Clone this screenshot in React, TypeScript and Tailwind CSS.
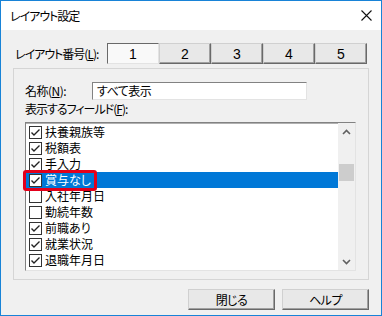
import React from "react";

const jp = "font-['Noto_Sans_CJK_JP',sans-serif] [font-feature-settings:'palt']";

const fields = [
  { label: "扶養親族等", checked: true },
  { label: "税額表", checked: true },
  { label: "手入力", checked: true },
  { label: "賞与なし", checked: true, selected: true },
  { label: "入社年月日", checked: false },
  { label: "勤続年数", checked: false },
  { label: "前職あり", checked: true },
  { label: "就業状況", checked: true },
  { label: "退職年月日", checked: true },
];

function CheckBox({ checked }: { checked: boolean }) {
  return (
    <div className="w-[13px] h-[13px] border border-[#333333] bg-white flex items-center justify-center shrink-0">
      {checked ? (
        <svg width="11" height="11" viewBox="0 0 11 11">
          <polyline points="1.5,5.5 4,8 9.5,2.5" fill="none" stroke="#222" strokeWidth="1.4" />
        </svg>
      ) : null}
    </div>
  );
}

function Chevron({ up }: { up?: boolean }) {
  return (
    <svg width="9" height="6" viewBox="0 0 9 6">
      <polyline
        points={up ? "1,5 4.5,1.5 8,5" : "1,1 4.5,4.5 8,1"}
        fill="none"
        stroke="#606060"
        strokeWidth="1.6"
      />
    </svg>
  );
}

const raised =
  "bg-[#e8e8e8] border border-t-[#d0d0d0] border-l-[#d0d0d0] border-r-[#696969] border-b-[#696969] shadow-[inset_-1px_-1px_0_#a0a0a0]";

export default function App() {
  const [tab, setTab] = React.useState(1);
  return (
    <div className={`w-[382px] h-[316px] overflow-hidden border border-[#1883d7] flex flex-col bg-[#f0f0f0] text-black text-[12px] whitespace-nowrap ${jp}`}>
      {/* title */}
      <div className="h-[29px] bg-white flex items-center justify-between pl-[9px] pr-[9px] shrink-0">
        <span className="leading-[16px] tracking-[-1px]">レイアウト設定</span>
        <svg width="11" height="11" viewBox="0 0 11 11">
          <path d="M0.5 0.5 L10.5 10.5 M10.5 0.5 L0.5 10.5" stroke="#111" strokeWidth="1.1" />
        </svg>
      </div>

      {/* body */}
      <div className="flex-1 flex flex-col">
        <div className="flex items-center pt-[13px] pl-[14px]">
          <span className="w-[92px] shrink-0 leading-[16px] tracking-[-1px]">
            レイアウト番号(<span className="underline">L</span>):
          </span>
          <div className="flex">
            {[1, 2, 3, 4, 5].map((n) =>
              n === tab ? (
                <button
                  key={n}
                  onClick={() => setTab(n)}
                  className="w-[52px] h-[21px] bg-[#f9f9f9] border border-t-[#696969] border-l-[#696969] border-r-[#e3e3e3] border-b-[#e3e3e3] font-['Liberation_Sans',sans-serif] text-[14px] leading-[18px]"
                >
                  {n}
                </button>
              ) : (
                <button
                  key={n}
                  onClick={() => setTab(n)}
                  className={`w-[52px] h-[21px] ${raised} font-['Liberation_Sans',sans-serif] text-[14px] leading-[18px]`}
                >
                  {n}
                </button>
              )
            )}
          </div>
        </div>

        {/* group box */}
        <div className="mt-[4px] ml-[12px] w-[356px] h-[212px] shrink-0 border border-[#d5d5d5] flex flex-col">
          <div className="flex items-center mt-[13px] pl-[11px]">
            <span className="w-[67px] shrink-0 leading-[16px] tracking-[-0.5px]">
              名称(<span className="underline">N</span>):
            </span>
            <div className="w-[215px] h-[18px] bg-white border border-t-[#828282] border-l-[#828282] border-r-[#e3e3e3] border-b-[#e3e3e3] pl-[4px] leading-[16px] tracking-[-0.5px]">
              すべて表示
            </div>
          </div>
          <div className="pl-[11px] mt-[1px] leading-[16px] tracking-[-1px]">
            表示するフィールド(<span className="underline">F</span>):
          </div>

          {/* listbox */}
          <div className="relative mt-[5px] ml-[11px] w-[331px] h-[149px] bg-white border border-t-[#828282] border-l-[#828282] border-r-[#e3e3e3] border-b-[#e3e3e3] shadow-[inset_0_1px_0_#b0b0b0] flex">
            <div className="flex-1 flex flex-col pt-[1px]">
              {fields.map((f) => (
                <div
                  key={f.label}
                  className={`h-[16px] flex items-center pl-[3px] gap-[3px] ${f.selected ? "bg-[#0078d7] text-white" : ""}`}
                >
                  <CheckBox checked={f.checked} />
                  <span className="leading-[16px]">{f.label}</span>
                </div>
              ))}
            </div>
            <div className="w-[17px] bg-[#f0f0f0] flex flex-col">
              <div className="h-[17px] flex items-center justify-center">
                <Chevron up />
              </div>
              <div className="flex-1 flex flex-col items-center">
                <div className="mt-[24px] w-[15px] h-[17px] bg-[#cdcdcd]" />
              </div>
              <div className="h-[17px] flex items-center justify-center">
                <Chevron />
              </div>
            </div>
            {/* annotation */}
            <div className="absolute left-[-3px] top-[47px] w-[74px] h-[21px] border-[3px] border-[#e3001b] rounded-[3px]" />
          </div>
        </div>

        {/* buttons */}
        <div className="flex justify-end gap-[7px] pr-[12px] mt-[9px]">
          <button className={`w-[87px] h-[21px] ${raised} leading-[16px] tracking-[-0.5px]`}>閉じる</button>
          <button className={`w-[87px] h-[21px] ${raised} leading-[16px] tracking-[-0.5px]`}>ヘルプ</button>
        </div>
      </div>
    </div>
  );
}
